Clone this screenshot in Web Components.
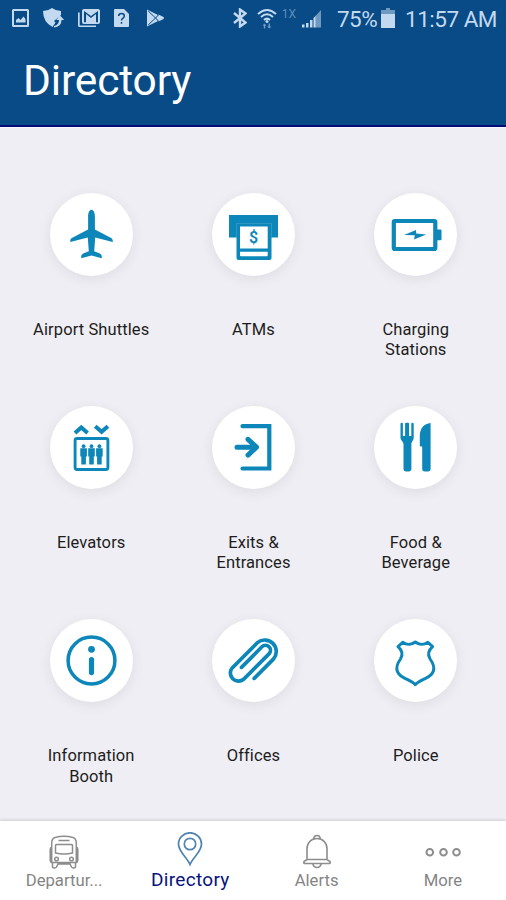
<!DOCTYPE html>
<html lang="en">
<head>
<meta charset="utf-8">
<meta name="viewport" content="width=device-width, initial-scale=1">
<title>Directory</title>
<style>
    body {
        margin: 0;
        font-family: Roboto, "Liberation Sans", sans-serif;
        background: #efeef4;
    }
</style>
</head>
<body>
<directory-app></directory-app>

<script>
// icons for the round buttons, drawn on the same 83px box as the button
const tileIcons = {
    plane: `<path fill="currentColor" d="M41.5 16.8c2.2 0 3.400 3.200 3.400 6.600v13.200l15.800 8.200c1.500.8 2.400 2.200 2 4.200L45.200 44.600 44.200 58.200l5.600 2.300c1.600.8 2.300 2.300 1.900 4.700L41.500 62.400l-10.200 2.800c-.4-2.400.3-3.900 1.900-4.700l5.600-2.300-1-13.600L20.300 49c-.4-2 .5-3.400 2-4.200l15.800-8.200V23.400c0-3.400 1.200-6.600 3.400-6.600z"/>`,
    atm: `<path fill="currentColor" d="M17 22h49v22.500h-6.500V65q0 2-2 2h-31q-2 0-2-2V44.500H17z"/>
        <path fill="#fff" d="M28 33.500h27.700v22H28zM28 58.700h27.700v3.600q0 1-1 1H29q-1 0-1-1z"/>
        <path fill="none" stroke="#4fa9cf" stroke-width=".5" d="M24.500 44V30.500h35V44"/>
        <text x="41.500" y="50.300" text-anchor="middle" font-size="16" font-weight="600" fill="currentColor">$</text>`,
    battery: `<rect x="19.800" y="28" width="41.500" height="28" rx="1" fill="none" stroke="currentColor" stroke-width="4.200"/>
        <path fill="currentColor" d="M63 36.500h3.500q1 0 1 1v8.800q0 1-1 1H63zM30 42l12-5 .2 3.600 10 .8L40 46.500l.8-4.200z"/>`,
    elevator: `<g fill="none" stroke="currentColor"><rect x="25.100" y="32.500" width="32.800" height="31" rx="2" stroke-width="2.900"/>
        <path stroke-width="4" d="m25 27 6.300-5.600L37.600 27M45.200 20.200l6.400 5.600 6.300-5.600"/></g>
        <g fill="currentColor"><g id="p"><circle cx="33.600" cy="40.200" r="1.900"/><path d="M30.300 42.300h6.600v8.300h-1v8h-4.600v-8h-1z"/></g>
        <use href="#p" x="7.900"/><use href="#p" x="15.800"/></g>`,
    exit: `<g fill="none" stroke="currentColor" stroke-width="4.200" stroke-linecap="round"><path d="M30.500 20.200h26.800v42.300H30.500"/>
        <path stroke-width="5" stroke-linejoin="round" d="M25 41.200h19M36 33.300l8.500 7.900-8.500 7.900"/></g>`,
    food: `<path fill="currentColor" d="M26.500 17.700q0-.9 1.200-.9t1.200.9V30h2.200V17.700q0-.9 1.100-.9h1.800q1.100 0 1.100.9V30h2.200V17.700q0-.9 1.200-.9t1.200.9V31.500c0 3.400-2.300 3.500-2.300 7v24.300q0 2.700-2.700 2.700H32.200q-2.700 0-2.700-2.700V38.500c0-3.500-3-3.600-3-7z"/>
        <path fill="currentColor" d="M56.600 17v45.800q0 2.700-2.700 2.700h-3q-2.700 0-2.700-2.700V40.500h-1.400q-1 0-1-1.200V29.500C46 22.500 50 17.500 56.600 17z"/>`,
    info: `<circle cx="41.500" cy="41.500" r="23.400" fill="none" stroke="currentColor" stroke-width="3.500"/>
        <circle cx="41.500" cy="30.300" r="3.400" fill="currentColor"/>
        <path stroke="currentColor" stroke-width="5.200" stroke-linecap="round" d="M41.500 40.600v13"/>`,
    clip: `<path fill="none" stroke="currentColor" stroke-width="3.700" stroke-linecap="round" d="M42.200 59.400 61.600 39.900A11.500 11.500 0 0 0 45.400 23.700L20.200 48.900A8.100 8.100 0 0 0 31.600 60.300L57 34.900A5 5 0 0 0 49.900 27.800L29.500 48.400"/>`,
    police: `<path fill="none" stroke="currentColor" stroke-width="3" stroke-linejoin="round" d="M41.300 23c-3.300 2.600-8.300 3.200-12.600.3L24 27.700c4.300 3.800 5.300 7.800 2.500 12.300-7 9.800-3.200 15.500 4.500 19.400 4.500 2 8.200 3.800 10.300 6.300 2.100-2.500 5.800-4.300 10.300-6.300 7.700-3.900 11.500-9.600 4.500-19.400-2.800-4.500-1.800-8.500 2.500-12.300l-4.700-4.400c-4.300 2.900-9.300 2.300-12.600-.3z"/>`
};

const tabIcons = {
    bus: `<g stroke-width="1.500"><path d="M9 3.500q9-2.500 18 0 3 1 3.300 5v20H5.700v-20q.3-4 3.300-5zM12.500 6.500h11M9.500 11.500q0-1 1-1h15q1 0 1 1V19q-8.500 2-17 0zM5.500 13q-1.300.5-1.300 3v10q0 2 1.500 3M30.500 13q1.300.5 1.300 3v10q0 2-1.500 3M6.500 28.500V33q1.500 2 4 0l1.500-3h12l1.500 3q2.500 2 4 0v-4.500"/><circle cx="10.500" cy="25" r="1.800"/><circle cx="25.500" cy="25" r="1.800"/></g>`,
    pin: `<g stroke-width="1.700"><path d="M18 32.500C15 25 6.500 20 6.500 12a11.500 11.200 0 0 1 23 0c0 8-8.500 13-11.500 20.500z"/><circle cx="18" cy="12" r="5.700"/></g>`,
    bell: `<g stroke-width="1.600"><path d="M8 25.500V15c0-6 4-10.500 10-10.500S28 9 28 15v10.500M8 25.500l-3 2q-.8 2 1.200 2h23.600q2 0 1.200-2l-3-2zM14.800 5q0-3.500 3.200-3.500T21.200 5M13.800 29.700q.7 3.800 4.200 3.800t4.200-3.800"/></g>`,
    more: `<g stroke-width="2"><circle cx="4.800" cy="18.300" r="3.300"/><circle cx="18.500" cy="18.300" r="3.300"/><circle cx="31.500" cy="18.300" r="3.300"/></g>`
};

class StatusBar extends HTMLElement {
    constructor() {
        super();
        const template = document.createElement('template');
        template.innerHTML = `
            <style>
                :host {
                    display: flex;
                    align-items: center;
                    justify-content: space-between;
                    height: 36px;
                    padding: 0 9px 0 12px;
                    box-sizing: border-box;
                    color: #c3d9ef;
                    font-size: 22.5px;
                }
                .group {
                    display: flex;
                    align-items: center;
                }
                svg {
                    display: block;
                    fill: currentColor;
                }
                .notes svg + svg { margin-left: 14px; }
                .net {
                    font-size: 12px;
                    color: #5f8ebb;
                    margin: -9px 6px 0 5px;
                }
                .percent {
                    margin: 2px 4px 0 15px;
                    letter-spacing: -0.6px;
                }
                .time {
                    margin: 2px 0 0 10px;
                    letter-spacing: -0.5px;
                }
            </style>
            <div class="group notes">
                <svg width="17" height="20" viewBox="0 0 17 20"><path fill-rule="evenodd" d="M1.500 1h14q1.500 0 1.500 1.500v15q0 1.500-1.500 1.500h-14Q0 19 0 17.500v-15Q0 1 1.500 1zM2 3v14h13V3zM4 14.500v-2.500l2.500-2 2 2 3-3.500 2 2.500v3.500z"/></svg>
                <svg width="21" height="20" viewBox="0 0 21 20"><path d="M0 3q5 0 9-3 4 3 9 3v4l-7 6 1.500 1.500-3 4.500Q0 14 0 3zM11 18q5-1 5-6h-2.800L17 7.500l4.200 4.500H18.500q0 7-7.500 7.500z"/></svg>
                <svg width="22" height="20" viewBox="0 0 22 20"><path fill-rule="evenodd" d="M6 1h14q2 0 2 2v11q0 2-2 2H6q-2 0-2-2V3q0-2 2-2zM6 14.300h2V6l5 4 5-4v8.300h2V3l-7 5-7-5zM0 4.500h1.700v13H18V19H1.500Q0 19 0 17.500z"/></svg>
                <svg width="15" height="20" viewBox="0 0 15 20"><path d="M1 1h9l5 5v12q0 1-1 1H1q-1 0-1-1V2q0-1 1-1z"/><path fill="none" stroke="#084b87" stroke-width="1.500" d="M4.700 8q0-2.500 2.800-2.500T10.300 8q0 1.300-1.300 2.200T7.500 12.500M7.500 14v1.800"/></svg>
                <svg style="margin-left: 18px" width="18" height="20" viewBox="0 0 18 20"><path d="M0 1.500 11 7 8.500 10 11 13 0 18.500z"/><path d="m11.500 6.500 5 2.500q1 1 0 2l-5 2.500L8.500 10z"/><path stroke="#084b87" stroke-width="1" fill="none" d="M1.200 3 8.500 10l-7.300 7M8.500 10l3.500-3.500M8.500 10l3.500 3.500"/></svg>
            </div>
            <div class="group">
                <svg width="14" height="20" viewBox="0 0 14 20"><path fill="none" stroke="currentColor" stroke-width="2.400" d="m1 5 11.500 9.500L7 18.500v-17l5.500 4L1 15"/></svg>
                <svg style="margin-left: 10px" width="20" height="21" viewBox="0 0 20 21"><g fill="none" stroke="currentColor" stroke-width="2"><path d="M1 6q9-8 18 0M4 9q6-5.400 12 0M7 12q3-2.700 6 0"/></g><circle cx="10" cy="13.500" r="1.500"/><path fill="#719cc5" d="m7.500 15.500 2 2H8.300v3H6.800v-3H5.500zM12.300 20.500l-2.300-2h1.500v-3H13v3h1.500z"/></svg>
                <span class="net">1X</span>
                <svg width="20" height="19" viewBox="0 0 20 19"><path fill="#6f99c1" d="M13 7.500 19 1v17.500h-6z"/><path d="M0 15.500h2.500v3H0zM4 14h2.500v4.500H4zM8 11h2.500v7.500H8zM11.500 9l2-2v11.500h-2z"/></svg>
                <span class="percent">75%</span>
                <svg width="14" height="20" viewBox="0 0 14 20"><path fill="#6f99c1" d="M5 0h4v2h5v5H0V2h5z"/><path d="M0 6h14v14H0z"/></svg>
                <span class="time">11:57 AM</span>
            </div>
        `;
        this.attachShadow({ mode: 'open' }).appendChild(template.content.cloneNode(true));
    }
}

class PageHeader extends HTMLElement {
    constructor() {
        super();
        const template = document.createElement('template');
        template.innerHTML = `
            <style>
                :host {
                    display: flex;
                    flex: none;
                    flex-direction: column;
                    height: 127px;
                    box-sizing: border-box;
                    background: #084b87;
                    border-bottom: 2px solid #000c78;
                }
                h1 {
                    margin: 0;
                    padding: 20px 0 0 23px;
                    font-size: 42.5px;
                    line-height: 50px;
                    letter-spacing: -0.15px;
                    font-weight: 400;
                    color: #fff;
                }
            </style>
            <status-bar></status-bar>
            <h1><slot></slot></h1>
        `;
        this.attachShadow({ mode: 'open' }).appendChild(template.content.cloneNode(true));
    }
}

class DirectoryTile extends HTMLElement {
    constructor() {
        super();
        const template = document.createElement('template');
        template.innerHTML = `
            <style>
                :host {
                    display: flex;
                    flex-direction: column;
                    align-items: center;
                    text-align: center;
                    color: #1d1d20;
                }
                .circle {
                    width: 83px;
                    height: 83px;
                    border-radius: 50%;
                    background: #fff;
                    color: #0d87b9;
                    box-shadow: 0 3px 14px rgba(0, 0, 0, 0.075);
                }
                svg { display: block; }
                .label {
                    width: 122px;
                    margin-top: 44.4px;
                    font-size: 16.5px;
                    line-height: 20.3px;
                    letter-spacing: 0.1px;
                }
            </style>
            <div class="circle">
                <svg width="83" height="83" viewBox="0 0 83 83">${tileIcons[this.getAttribute('icon')] || ''}</svg>
            </div>
            <div class="label"><slot></slot></div>
        `;
        this.attachShadow({ mode: 'open' }).appendChild(template.content.cloneNode(true));
    }
}

class TabItem extends HTMLElement {
    constructor() {
        super();
        const template = document.createElement('template');
        template.innerHTML = `
            <style>
                :host {
                    flex: 1;
                    display: flex;
                    flex-direction: column;
                    align-items: center;
                    padding-top: 12.5px;
                    color: #858585;
                    --icon: #8d8d8d;
                }
                :host([active]) {
                    padding-top: 10.5px;
                    color: #08137e;
                    --icon: #4f83b0;
                }
                svg {
                    display: block;
                    fill: none;
                    stroke: var(--icon);
                }
                span {
                    margin-top: 2.500px;
                    font-size: 16.7px;
                    line-height: 20px;
                }
                :host([active]) span {
                    margin-top: 3.500px;
                    font-size: 19px;
                    letter-spacing: 0.3px;
                }
            </style>
            <svg width="36" height="35" viewBox="0 0 36 35">${tabIcons[this.getAttribute('icon')] || ''}</svg>
            <span><slot></slot></span>
        `;
        this.attachShadow({ mode: 'open' }).appendChild(template.content.cloneNode(true));
    }
}

class TabBar extends HTMLElement {
    constructor() {
        super();
        const template = document.createElement('template');
        template.innerHTML = `
            <style>
                :host {
                    display: flex;
                    flex: none;
                    height: 79px;
                    padding-left: 1px;
                    box-sizing: border-box;
                    background: #fff;
                    box-shadow: 0 -1px 3px rgba(0, 0, 0, 0.14);
                }
            </style>
            <slot></slot>
        `;
        this.attachShadow({ mode: 'open' }).appendChild(template.content.cloneNode(true));
    }
}

class DirectoryApp extends HTMLElement {
    constructor() {
        super();
        const template = document.createElement('template');
        template.innerHTML = `
            <style>
                :host {
                    display: flex;
                    flex-direction: column;
                    width: 506px;
                    height: 900px;
                    overflow: hidden;
                }
                main {
                    flex: 1;
                    min-height: 0;
                    display: grid;
                    grid-template-columns: repeat(3, 162.3px);
                    grid-auto-rows: 213.2px;
                    align-content: start;
                    justify-content: center;
                    padding: 64.6px 0 0 1px;
                    border-top: 1px solid #f8f5fb;
                    box-sizing: border-box;
                }
            </style>
            <page-header>Directory</page-header>
            <main>
                <directory-tile icon="plane">Airport Shuttles</directory-tile>
                <directory-tile icon="atm">ATMs</directory-tile>
                <directory-tile icon="battery">Charging<br>Stations</directory-tile>
                <directory-tile icon="elevator">Elevators</directory-tile>
                <directory-tile icon="exit">Exits &amp;<br>Entrances</directory-tile>
                <directory-tile icon="food">Food &amp;<br>Beverage</directory-tile>
                <directory-tile icon="info">Information<br>Booth</directory-tile>
                <directory-tile icon="clip">Offices</directory-tile>
                <directory-tile icon="police">Police</directory-tile>
            </main>
            <tab-bar>
                <tab-item icon="bus">Departur...</tab-item>
                <tab-item icon="pin" active>Directory</tab-item>
                <tab-item icon="bell">Alerts</tab-item>
                <tab-item icon="more">More</tab-item>
            </tab-bar>
        `;
        this.attachShadow({ mode: 'open' }).appendChild(template.content.cloneNode(true));
    }
}

customElements.define('status-bar', StatusBar);
customElements.define('page-header', PageHeader);
customElements.define('directory-tile', DirectoryTile);
customElements.define('tab-item', TabItem);
customElements.define('tab-bar', TabBar);
customElements.define('directory-app', DirectoryApp);
</script>
</body>
</html>
